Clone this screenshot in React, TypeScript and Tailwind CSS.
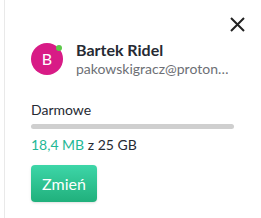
export default function App() {
  return (
    <div className="h-[218px] w-[261px] bg-white pl-1" style={{ fontFamily: 'Lato, sans-serif' }}>
      <div className="h-full border-l border-[#e9e9e9] pl-[26px] pr-4">
        {/* Close */}
        <div className="flex justify-end pt-[17px]">
          <svg width="15" height="15" viewBox="0 0 15 15" className="text-[#222]">
            <path d="M1 1L14 14M14 1L1 14" stroke="currentColor" strokeWidth="2" />
          </svg>
        </div>

        {/* User */}
        <div className="mt-[8px] flex items-center gap-[13px]">
          <div className="relative h-8 w-8 shrink-0">
            <div className="flex h-8 w-8 items-center justify-center rounded-full bg-[#d81b86] text-[16px] text-white">
              B
            </div>
            <span className="absolute right-[1px] top-[2px] h-[6px] w-[6px] rounded-full bg-[#5ec84a]" />
          </div>
          <div className="min-w-0">
            <div className="text-[16px] font-bold leading-[20px] text-[#262a33]">Bartek Ridel</div>
            <div className="truncate text-[14px] leading-[18px] text-[#6d6f75]">pakowskigracz@proton…</div>
          </div>
        </div>

        {/* Plan */}
        <div className="mt-[22px] text-[14px] leading-[20px] text-[#262a33]">Darmowe</div>
        <div className="mt-[4px] h-[5px] w-[203px] rounded-full bg-[#cfcfcf]" />
        <div className="mt-[6px] text-[14px] leading-[20px] text-[#262a33]">
          <span className="text-[#1fb896]">18,4 MB</span> z 25 GB
        </div>

        <button className="mt-[10px] h-[37px] w-[66px] rounded-[4px] bg-gradient-to-b from-[#3dd6a8] to-[#20b07c] text-[16px] text-white shadow-sm">
          Zmień
        </button>
      </div>
    </div>
  );
}
